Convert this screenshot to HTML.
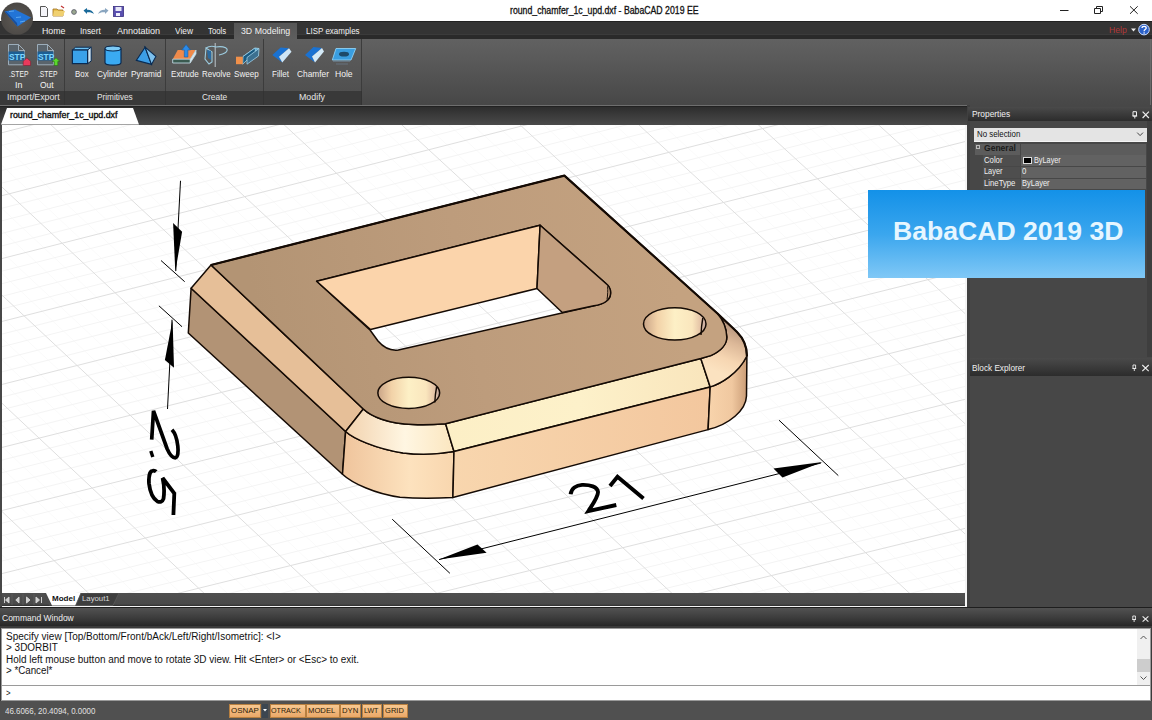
<!DOCTYPE html>
<html><head><meta charset="utf-8">
<style>
*{margin:0;padding:0;box-sizing:border-box}
html,body{width:1152px;height:720px;overflow:hidden;background:#474747;font-family:"Liberation Sans",sans-serif}
.a{position:absolute}
.t{position:absolute;white-space:nowrap;line-height:1}
#title{left:0;top:0;width:1152px;height:21px;background:#fff}
#tabbar{left:0;top:21px;width:1152px;height:18px;background:linear-gradient(#222 0,#222 1px,#343434 1px,#343434 13.5px,#3b3b3b 13.5px,#3b3b3b 14.5px,#2a2a2a 14.5px)}
#ribbon{left:0;top:39px;width:1152px;height:66px;background:linear-gradient(#616161,#5a5a5a 30%,#474747)}
.tab{color:#f0f0f0;font-size:9.6px;top:25.9px}
.grp{top:39px;height:52px;border-right:1px solid #3c3c3c;background:linear-gradient(#5e5e5e,#505050)}
.glab{top:91px;height:14px;background:#393939;border-right:1px solid #333}
.gtxt{color:#e6e6e6;font-size:9.4px;top:93.5px}
.btxt{color:#f2f2f2;font-size:9.4px;top:69.8px}
#doctabbar{left:0;top:105px;width:1152px;height:20px;background:linear-gradient(#6e6e6e 0,#6e6e6e 1.5px,#222 1.5px,#2e2e2e 2.5px,#4a4a4a 20px)}
#viewport{left:2px;top:125px;width:965px;height:482px;background:#fff;overflow:hidden}
#rpanel{left:967px;top:105px;width:185px;height:504px;background:#474747}
.phdr{position:absolute;background:linear-gradient(#4a4a4a,#2c2c2c);color:#f0f0f0}
.pt{color:#f0f0f0;font-size:9.4px}
.cmd{font-size:10px;color:#111}
.sb{position:absolute;top:704px;height:14px;background:linear-gradient(#f8c890,#eaa868);border:1px solid #b88040}
.sbt{color:#2a1a08;font-size:8px}
</style></head>
<body>
<!-- title bar -->
<div id="title" class="a"></div>
<div id="tabbar" class="a"></div>
<div id="ribbon" class="a"></div>
<div id="doctabbar" class="a"></div>

<!-- app logo -->
<svg class="a" style="left:0;top:0" width="36" height="37" viewBox="0 0 36 37">
  <defs><radialGradient id="lg" cx="50%" cy="55%" r="55%"><stop offset="0" stop-color="#5e5a55"/><stop offset="1" stop-color="#4a4744"/></radialGradient></defs>
  <circle cx="17" cy="18.6" r="16" fill="url(#lg)"/>
  <path d="M4.5 11.5 L15 9.5 L31 17.5 L17.5 26.5 Z" fill="#2274d6"/>
  <path d="M4.5 11.5 L17.5 26.5 L17 23 L6.5 12 Z" fill="#1a4e9a"/>
  <path d="M9 11.5 L14 11 M16 17.5 L21 17 M20 22 L25 21" stroke="#5aa6f0" stroke-width="1"/>
</svg>
<!-- quick access -->
<svg class="a" style="left:38px;top:4px" width="90" height="15" viewBox="38 4 90 15">
  <path d="M40.5 6.5 H45.5 L47.5 8.5 V16.5 H40.5 Z" fill="#f4f4f8" stroke="#555" stroke-width="1"/>
  <path d="M53 9 H57 L58 10 H63 V16 H53 Z" fill="#e8c050" stroke="#a07020" stroke-width="0.8"/>
  <path d="M54 11 H65 L63 16 H53 Z" fill="#f0d070"/>
  <path d="M61 6 L64 8" stroke="#c03030" stroke-width="1.2"/>
  <circle cx="74" cy="12" r="2.4" fill="#9aa890" stroke="#556" stroke-width="0.8"/>
  <path d="M83.5 10.5 L87 8 L87 9.8 C90 9.5 93 11 94 14 C92 12.5 90 12 87 12.3 L87 14 Z" fill="#1a6a9a"/>
  <path d="M108.5 10.5 L105 8 L105 9.8 C102 9.5 99 11 98 14 C100 12.5 102 12 105 12.3 L105 14 Z" fill="#8aa6c0"/>
  <rect x="113.5" y="6.5" width="10" height="10" fill="#5a50b0" stroke="#3a3080" stroke-width="0.8"/>
  <rect x="115.5" y="7" width="6" height="4" fill="#e8e8f8"/>
  <rect x="116" y="13" width="4" height="3" fill="#f0f0ff"/>
</svg>
<div id="t1" class="t" style="-webkit-text-stroke:0.3px #111;left:510.00px;top:5.97px;font-size:10.2px;color:#111;transform:scaleX(0.8558);transform-origin:0 0">round_chamfer_1c_upd.dxf - BabaCAD 2019 EE</div>
<!-- window controls -->
<svg class="a" style="left:1055px;top:3px" width="90" height="15" viewBox="1055 3 90 15">
  <path d="M1060 10.5 H1068.5" stroke="#222" stroke-width="1"/>
  <path d="M1094.5 8.5 H1100.5 V13.5 H1094.5 Z M1096.5 8.5 V6.5 H1102.5 V11.5 H1100.5" fill="none" stroke="#222" stroke-width="1"/>
  <path d="M1130 6.3 L1137.7 13.8 M1137.7 6.3 L1130 13.8" stroke="#222" stroke-width="1"/>
</svg>

<!-- ribbon tabs -->
<div class="a" style="left:234px;top:23px;width:63px;height:16px;background:linear-gradient(#565656,#5e5e5e)"></div>
<div id="t2" class="t tab" style="left:41.80px;font-size:9.6px;top:25.87px;transform:scaleX(0.9186);transform-origin:0 0">Home</div>
<div id="t3" class="t tab" style="left:80.00px;font-size:9.6px;top:25.87px;transform:scaleX(0.8632);transform-origin:0 0">Insert</div>
<div id="t4" class="t tab" style="left:117.00px;font-size:9.6px;top:25.87px;transform:scaleX(0.9398);transform-origin:0 0">Annotation</div>
<div id="t5" class="t tab" style="left:175.00px;font-size:9.6px;top:25.87px;transform:scaleX(0.8699);transform-origin:0 0">View</div>
<div id="t6" class="t tab" style="left:207.70px;font-size:9.6px;top:25.87px;transform:scaleX(0.8098);transform-origin:0 0">Tools</div>
<div id="t7" class="t tab" style="left:240.80px;font-size:9.6px;top:25.87px;transform:scaleX(0.9136);transform-origin:0 0">3D Modeling</div>
<div id="t8" class="t tab" style="left:305.70px;font-size:9.6px;top:25.87px;transform:scaleX(0.8327);transform-origin:0 0">LISP examples</div>
<div id="t9" class="t" style="left:1108.50px;top:24.87px;font-size:9.6px;color:#b03838;transform:scaleX(0.9023);transform-origin:0 0">Help</div>
<svg class="a" style="left:1128px;top:22px" width="24" height="16" viewBox="1128 22 24 16">
  <path d="M1131 28.5 H1136 L1133.5 31.5 Z" fill="#eee"/>
  <circle cx="1144" cy="29.6" r="5.3" fill="#2a60c8" stroke="#cfe0ff" stroke-width="1"/>
  <path d="M1142 28 C1142 25.8 1146.2 25.8 1146.2 28 C1146.2 29.6 1144.1 29.6 1144.1 31.3" fill="none" stroke="#fff" stroke-width="1.3"/>
  <circle cx="1144.1" cy="33" r="0.8" fill="#fff"/>
</svg>

<!-- ribbon groups -->
<div class="a grp" style="left:0;width:65px"></div>
<div class="a grp" style="left:65px;width:101px"></div>
<div class="a grp" style="left:166px;width:98px"></div>
<div class="a grp" style="left:264px;width:98px"></div>
<div class="a glab" style="left:0;width:65px"></div>
<div class="a glab" style="left:65px;width:101px"></div>
<div class="a glab" style="left:166px;width:98px"></div>
<div class="a glab" style="left:264px;width:98px"></div>
<div class="a" style="left:1150px;top:39px;width:1px;height:66px;background:#6a6a6a"></div>
<div id="t10" class="t gtxt" style="left:6.60px;font-size:9px;top:93.38px;transform:scaleX(0.9758);transform-origin:0 0">Import/Export</div>
<div id="t11" class="t gtxt" style="left:97.40px;font-size:9px;top:93.38px;transform:scaleX(0.9164);transform-origin:0 0">Primitives</div>
<div id="t12" class="t gtxt" style="left:202.30px;font-size:9px;top:93.38px;transform:scaleX(0.9294);transform-origin:0 0">Create</div>
<div id="t13" class="t gtxt" style="left:299.40px;font-size:9px;top:93.38px;transform:scaleX(0.9812);transform-origin:0 0">Modify</div>
<div id="t14" class="t btxt" style="left:8.50px;font-size:9.2px;top:70.01px;transform:scaleX(0.7343);transform-origin:0 0">.STEP</div>
<div id="t15" class="t btxt" style="left:14.90px;top:81.01px;font-size:9.2px;transform:scaleX(0.9666);transform-origin:0 0">In</div>
<div id="t16" class="t btxt" style="left:37.70px;font-size:9.2px;top:70.01px;transform:scaleX(0.7343);transform-origin:0 0">.STEP</div>
<div id="t17" class="t btxt" style="left:40.10px;top:81.01px;font-size:9.2px;transform:scaleX(0.9177);transform-origin:0 0">Out</div>
<div id="t18" class="t btxt" style="left:75.30px;font-size:9.2px;top:70.01px;transform:scaleX(0.8622);transform-origin:0 0">Box</div>
<div id="t19" class="t btxt" style="left:97.40px;font-size:9.2px;top:70.01px;transform:scaleX(0.8977);transform-origin:0 0">Cylinder</div>
<div id="t20" class="t btxt" style="left:131.30px;font-size:9.2px;top:70.01px;transform:scaleX(0.9022);transform-origin:0 0">Pyramid</div>
<div id="t21" class="t btxt" style="left:170.60px;font-size:9.2px;top:70.01px;transform:scaleX(0.8779);transform-origin:0 0">Extrude</div>
<div id="t22" class="t btxt" style="left:201.60px;font-size:9.2px;top:70.01px;transform:scaleX(0.8645);transform-origin:0 0">Revolve</div>
<div id="t23" class="t btxt" style="left:233.80px;font-size:9.2px;top:70.01px;transform:scaleX(0.8791);transform-origin:0 0">Sweep</div>
<div id="t24" class="t btxt" style="left:272.00px;font-size:9.2px;top:70.01px;transform:scaleX(0.8768);transform-origin:0 0">Fillet</div>
<div id="t25" class="t btxt" style="left:296.70px;font-size:9.2px;top:70.01px;transform:scaleX(0.9070);transform-origin:0 0">Chamfer</div>
<div id="t26" class="t btxt" style="left:335.40px;font-size:9.2px;top:70.01px;transform:scaleX(0.9316);transform-origin:0 0">Hole</div>

<!-- ICONS -->
<svg class="a" style="left:0;top:38px" width="370" height="32" viewBox="0 38 370 32">
 <!-- STEP In -->
 <path d="M8.5 44.5 H18.5 L24.5 50.5 V64.8 H8.5 Z M18.5 44.5 V50.5 H24.5" fill="#5a646c" stroke="#a4b6c4" stroke-width="0.9"/>
 <rect x="8.5" y="51.5" width="16" height="9" fill="#1d5f93"/>
 <text x="9" y="59.6" font-size="8.4" font-weight="bold" fill="#7fd6ff" font-family="Liberation Sans">STP</text>
 <path d="M26.9 58 L30.6 61.3 V65.5 H23.2 V61.3 Z" fill="#e83a5c" stroke="#7a2030" stroke-width="0.6"/>
 <!-- STEP Out -->
 <path d="M37.5 44.5 H47.5 L53.5 50.5 V64.8 H37.5 Z M47.5 44.5 V50.5 H53.5" fill="#5a646c" stroke="#a4b6c4" stroke-width="0.9"/>
 <rect x="37.5" y="51.5" width="16" height="9" fill="#1d5f93"/>
 <text x="38" y="59.6" font-size="8.4" font-weight="bold" fill="#7fd6ff" font-family="Liberation Sans">STP</text>
 <path d="M56 57.8 L60 61.5 H57.8 V65.5 H54.2 V61.5 H52 Z" fill="#5ad82c" stroke="#2a6a1a" stroke-width="0.6"/>
 <!-- Box -->
 <path d="M72.4 50 L75.6 47.2 H91.2 L87.6 50 Z" fill="#6cc0f2" stroke="#0a2a50" stroke-width="1"/>
 <path d="M87.6 50 L91.2 47.2 V61 L87.6 63.6 Z" fill="#cfe4f2" stroke="#0a2a50" stroke-width="1"/>
 <rect x="72.4" y="50" width="15.2" height="13.6" fill="#3aa2ea" stroke="#0a2a50" stroke-width="1.2"/>
 <!-- Cylinder -->
 <path d="M105 48.5 V62.5 A8 2.6 0 0 0 121 62.5 V48.5" fill="#3aaaf2" stroke="#0a2a50" stroke-width="1.2"/>
 <ellipse cx="113" cy="48.5" rx="8" ry="2.5" fill="#7ccaf6" stroke="#0a2a50" stroke-width="1.1"/>
 <!-- Pyramid -->
 <path d="M145.1 47.2 L136.3 60.4 L151.5 64.4 Z" fill="#3c9ee6" stroke="#0a2a50" stroke-width="1.1"/>
 <path d="M145.1 47.2 L155.9 56.4 L151.5 64.4 Z" fill="#7cc0ee" stroke="#0a2a50" stroke-width="1.1"/>
 <!-- Extrude -->
 <path d="M172.7 59.2 L177.7 50 H196 L190.2 59.2 Z" fill="#f08a4a"/>
 <path d="M172.7 59.2 H190.2 V63 H172.7 Z" fill="#3a5a50" stroke="#bcd6e0" stroke-width="0.9"/>
 <path d="M190.2 59.2 L196 50 V54 L190.2 63" fill="#d8e8f0" stroke="#bcd6e0" stroke-width="0.8"/>
 <path d="M184.3 57 V50 H181.8 L186.1 44.5 L190.4 50 H187.9 V57 Z" fill="#2a8ae8" stroke="#1a5aa0" stroke-width="0.6"/>
 <!-- Revolve -->
 <path d="M215.2 43 V67" stroke="#c8d4dc" stroke-width="0.9"/>
 <path d="M206 48 C209 46 213 46 216 47 C221 46 226 47 227 49 C228 52 224 54 219 55 M206 48 L205 59 L209 64 L212 62 L212 52 Z" fill="none" stroke="#9ccce0" stroke-width="1.1"/>
 <path d="M207 50 L211 51 L211 60 L208 58 Z" fill="#2a6aa0"/>
 <!-- Sweep -->
 <path d="M243 56.5 L255 48 L259 48.5 L247 57.5 Z" fill="#4aa8d8" stroke="#aad8ee" stroke-width="0.8"/>
 <path d="M243 56.5 L255 48 L255.5 52 L247 60 L242.7 64.2 Z" fill="#1a5a80" stroke="#9fd0e8" stroke-width="0.8"/>
 <path d="M247 57.5 L259 48.5 L258.5 56 L247 64.2 Z" fill="#3c7090" stroke="#9fd0e8" stroke-width="0.8"/>
 <rect x="236" y="56.7" width="6.7" height="7.5" fill="#f0904a"/>
 <!-- Fillet -->
 <path d="M272.3 55 L280.7 47.5 L289 48.3 L279 56.7 L282.3 62.5 Z" fill="#1a72d2"/>
 <path d="M279 56.7 L289 48.3 L291.5 51.7 L282.3 62.5 Z" fill="#cfe6f6"/>
 <!-- Chamfer -->
 <path d="M305 55 L313.5 47 L322 48 L312 56.5 L315 62.5 Z" fill="#1a72d2"/>
 <path d="M312 56.5 L322 48 L324 51.5 L315 62.5 Z" fill="#d4eaf8"/>
 <!-- Hole -->
 <path d="M336 48.5 H355.7 L351 60 H332.3 Z" fill="#3a9ee0" stroke="#8fd0f4" stroke-width="0.9"/>
 <ellipse cx="344" cy="54.2" rx="5" ry="2.4" fill="#1d4a6a"/>
 <path d="M333 61.5 H350 M336 64 H348" stroke="#6a7a88" stroke-width="0.8"/>
</svg>

<!-- doc tab -->
<svg class="a" style="left:0;top:107px" width="145" height="18" viewBox="0 107 145 18">
  <path d="M1 124.5 L7 108 H133 L139 124.5 Z" fill="#fff"/>
</svg>
<div id="t27" class="t" style="-webkit-text-stroke:0.35px #111;left:10.40px;top:110.82px;font-size:8.6px;color:#111;transform:scaleX(1.0272);transform-origin:0 0">round_chamfer_1c_upd.dxf</div>

<!-- viewport -->
<div id="viewport" class="a"></div>
<svg id="model" class="a" style="left:2px;top:125px" width="963" height="468" viewBox="2 125 963 468">
<defs>
 <linearGradient id="gFRC" x1="345" y1="0" x2="454" y2="0" gradientUnits="userSpaceOnUse">
  <stop offset="0" stop-color="#f2d2ae"/><stop offset="0.55" stop-color="#fff6e2"/><stop offset="1" stop-color="#fbe6bf"/></linearGradient>
 <linearGradient id="gFRS" x1="343" y1="0" x2="454" y2="0" gradientUnits="userSpaceOnUse">
  <stop offset="0" stop-color="#efc49c"/><stop offset="0.6" stop-color="#fde2be"/><stop offset="1" stop-color="#f8d6ae"/></linearGradient>
 <linearGradient id="gFC" x1="450" y1="0" x2="710" y2="0" gradientUnits="userSpaceOnUse">
  <stop offset="0" stop-color="#fcefc6"/><stop offset="0.5" stop-color="#fdf1ca"/><stop offset="1" stop-color="#f9e5bc"/></linearGradient>
 <linearGradient id="gFS" x1="450" y1="0" x2="710" y2="0" gradientUnits="userSpaceOnUse">
  <stop offset="0" stop-color="#f8d6ae"/><stop offset="1" stop-color="#f3c79e"/></linearGradient>
 <linearGradient id="gRC" x1="738" y1="326" x2="718" y2="372" gradientUnits="userSpaceOnUse">
  <stop offset="0" stop-color="#b3927a"/><stop offset="0.35" stop-color="#dcb898"/><stop offset="0.7" stop-color="#f6d6b2"/><stop offset="1" stop-color="#fbe2c0"/></linearGradient>
 <linearGradient id="gRS" x1="708" y1="0" x2="748" y2="0" gradientUnits="userSpaceOnUse">
  <stop offset="0" stop-color="#f8d4ac"/><stop offset="0.6" stop-color="#f0c8a0"/><stop offset="1" stop-color="#c89a74"/></linearGradient>
 <linearGradient id="gH" x1="0" y1="0" x2="1" y2="0">
  <stop offset="0" stop-color="#c9a487"/><stop offset="0.22" stop-color="#f2d2a8"/><stop offset="0.5" stop-color="#fdf0c6"/><stop offset="0.78" stop-color="#fae6bd"/><stop offset="0.9" stop-color="#e6c6a8"/><stop offset="1" stop-color="#c4a8a0"/></linearGradient>
 <linearGradient id="gTF" x1="260" y1="330" x2="670" y2="250" gradientUnits="userSpaceOnUse">
  <stop offset="0" stop-color="#b39474"/><stop offset="0.5" stop-color="#bd9c7c"/><stop offset="1" stop-color="#c4a280"/></linearGradient>
</defs>
<g id="grid" fill="none"><path stroke="#fafafa" stroke-width="1" d="M-576.5 157.8L155.8 852.6M-558.8 153.2L174.1 848.2M-541.1 148.6L192.5 843.7M-523.4 144.0L210.8 839.3M-488.0 134.8L247.6 830.5M-470.3 130.1L266.0 826.0M-452.5 125.5L284.4 821.6M-434.8 120.9L302.8 817.2M-399.2 111.6L339.7 808.3M-381.4 107.0L358.2 803.8M-363.6 102.3L376.7 799.4M-345.7 97.7L395.2 794.9M-310.0 88.4L432.3 786.0M-292.2 83.7L450.8 781.5M-274.3 79.1L469.4 777.0M-256.4 74.4L488.0 772.6M-220.5 65.1L525.2 763.6M-202.6 60.4L543.8 759.1M-184.6 55.7L562.4 754.6M-166.6 51.0L581.1 750.1M-130.6 41.7L618.4 741.1M-112.6 37.0L637.2 736.6M-94.6 32.3L655.9 732.1M-76.5 27.6L674.6 727.6M-40.4 18.1L712.1 718.6M-22.3 13.4L730.9 714.0M-4.2 8.7L749.7 709.5M13.9 4.0L768.5 705.0M50.2 -5.5L806.2 695.9M68.4 -10.2L825.0 691.3M86.5 -14.9L843.9 686.8M104.7 -19.7L862.8 682.3M141.2 -29.2L900.6 673.1M159.4 -33.9L919.5 668.6M177.6 -38.7L938.5 664.0M195.9 -43.4L957.5 659.4M232.5 -53.0L995.4 650.3M250.8 -57.7L1014.4 645.7M269.1 -62.5L1033.5 641.1M287.5 -67.3L1052.5 636.5M324.2 -76.9L1090.7 627.4M342.6 -81.6L1109.8 622.8M361.0 -86.4L1128.9 618.2M379.4 -91.2L1148.0 613.5M416.3 -100.8L1186.3 604.3M434.7 -105.7L1205.4 599.7M453.2 -110.5L1224.6 595.1M471.7 -115.3L1243.8 590.5M508.7 -124.9L1282.3 581.2M527.3 -129.8L1301.5 576.5M545.8 -134.6L1320.8 571.9M564.4 -139.4L1340.1 567.3M601.6 -149.1L1378.7 558.0M620.2 -154.0L1398.0 553.3M638.8 -158.8L1417.4 548.6M657.5 -163.7L1436.8 544.0M694.8 -173.4L1475.5 534.6M713.5 -178.3L1494.9 530.0M732.2 -183.1L1514.4 525.3M750.9 -188.0L1533.8 520.6"/><path stroke="#f4f4f4" stroke-width="1" d="M-583.9 172.1L780.6 -183.0M-573.6 181.9L791.6 -173.1M-563.4 191.6L802.5 -163.1M-553.1 201.3L813.5 -153.2M-532.6 220.8L835.5 -133.3M-522.3 230.6L846.5 -123.4M-512.0 240.4L857.5 -113.4M-501.7 250.1L868.5 -103.4M-481.1 269.7L890.6 -83.5M-470.8 279.5L901.6 -73.5M-460.5 289.3L912.7 -63.5M-450.2 299.1L923.7 -53.5M-429.5 318.7L945.8 -33.5M-419.2 328.5L956.9 -23.5M-408.8 338.3L968.0 -13.5M-398.5 348.1L979.1 -3.5M-377.7 367.8L1001.3 16.6M-367.4 377.6L1012.4 26.7M-357.0 387.5L1023.5 36.7M-346.6 397.4L1034.6 46.8M-325.8 417.1L1056.8 66.9M-315.4 427.0L1068.0 77.0M-305.0 436.8L1079.1 87.0M-294.6 446.7L1090.3 97.1M-273.8 466.5L1112.6 117.3M-263.4 476.4L1123.8 127.4M-252.9 486.3L1134.9 137.5M-242.5 496.2L1146.1 147.6M-221.6 516.1L1168.5 167.9M-211.1 526.0L1179.7 178.0M-200.7 535.9L1190.9 188.2M-190.2 545.9L1202.1 198.3M-169.2 565.8L1224.6 218.6M-158.7 575.7L1235.8 228.8M-148.2 585.7L1247.1 239.0M-137.7 595.7L1258.3 249.1M-116.7 615.6L1280.9 269.5M-106.2 625.6L1292.1 279.7M-95.7 635.6L1303.4 289.9M-85.1 645.6L1314.7 300.1M-64.0 665.6L1337.3 320.5M-53.5 675.6L1348.6 330.8M-42.9 685.7L1359.9 341.0M-32.4 695.7L1371.2 351.2M-11.2 715.8L1393.9 371.7M-0.6 725.8L1405.2 382.0M10.0 735.9L1416.6 392.3M20.5 745.9L1427.9 402.5M41.8 766.1L1450.7 423.1M52.4 776.1L1462.0 433.4M63.0 786.2L1473.4 443.7M73.6 796.3L1484.8 454.0M94.9 816.5L1507.6 474.6M105.5 826.6L1519.0 484.9M116.2 836.7L1530.4 495.2M126.8 846.9L1541.8 505.6"/><path stroke="#dfdfdf" stroke-width="1" d="M-594.1 162.4L137.5 857.0M-505.7 139.4L229.2 834.9M-417.0 116.3L321.3 812.7M-327.9 93.0L413.7 790.4M-238.5 69.7L506.6 768.1M-148.7 46.3L599.8 745.6M-58.5 22.9L693.4 723.1M32.0 -0.7L787.3 700.4M122.9 -24.4L881.7 677.7M214.2 -48.2L976.4 654.9M305.8 -72.1L1071.6 631.9M397.8 -96.0L1167.1 608.9M490.2 -120.1L1263.1 585.8M583.0 -144.3L1359.4 562.6M676.1 -168.5L1456.1 539.3M769.6 -192.9L1553.3 515.9M-594.1 162.4L769.6 -192.9M-542.8 211.1L824.5 -143.3M-491.4 259.9L879.6 -93.5M-439.8 308.9L934.8 -43.5M-388.1 358.0L990.2 6.6M-336.2 407.2L1045.7 56.8M-284.2 456.6L1101.4 107.2M-232.0 506.1L1157.3 157.8M-179.7 555.8L1213.4 208.5M-127.2 605.6L1269.6 259.3M-74.6 655.6L1326.0 310.3M-21.8 705.7L1382.6 361.5M31.2 756.0L1439.3 412.8M84.3 806.4L1496.2 464.3M137.5 857.0L1553.3 515.9"/></g>
<g stroke="#140a04" stroke-width="1.5" stroke-linejoin="round">
 <!-- left side -->
 <path d="M191.1 288.3 L345.6 431.5 L342.5 474.2 L188.3 333 Z" fill="#b29375"/>
 <!-- left chamfer -->
 <path d="M211 265 L363.3 409 L345.6 431.5 L191.1 288.3 Z" fill="#e6bf98"/>
 <!-- front round side -->
 <path d="M345.6 431.5 C353 438.3 375 448.5 403 453 C425 455.5 440 454 454 451.5 L452.9 497.5 C435 498.5 415 498.5 400 497.2 C375 494 352 483 342.5 474.2 Z" fill="url(#gFRS)"/>
 <!-- front round chamfer -->
 <path d="M363.3 409 C371 416.3 388 424 413 424.5 C425 425 436 424.5 445.6 423.75 L454 451.5 C440 454 425 455.5 403 453 C375 448.5 353 438.3 345.6 431.5 Z" fill="url(#gFRC)"/>
 <!-- front chamfer -->
 <path d="M445.6 423.75 L700.8 358.5 L710.2 386.9 L454 451.5 Z" fill="url(#gFC)"/>
 <!-- front side -->
 <path d="M454 451.5 L710.2 386.9 L708.1 429.6 L452.9 497.5 Z" fill="url(#gFS)"/>
 <!-- right round side -->
 <path d="M710.2 386.9 C720 384 738 374 746.9 356 L746.5 396 C746 410 730 424 708.1 429.6 Z" fill="url(#gRS)"/>
 <!-- right round chamfer -->
 <path d="M700.8 358.5 L710.8 355.6 C721 351 727 344 726.8 337 C726.5 328 723 320 717.5 313.5 C722 318 731 326 737 332 C743 338 747 345 746.9 356 C738 374 720 384 710.2 386.9 Z" fill="url(#gRC)"/>
 <!-- top face with square hole -->
 <path fill-rule="evenodd" fill="url(#gTF)" d="M211 265 L564.4 175.6 L717.5 313.5 C723 320 726.5 328 726.8 337 C727 344 721 351 710.8 355.6 L700.8 358.5 L445.6 423.75 C436 424.5 425 425 413 424.5 C388 424 371 416.3 363.3 409 Z
   M316.7 281.25 L540.1 225.3 L606.5 284 C611 287.5 613 296.5 606 301.5 C602.5 304 597.5 305.2 593.9 305.7 L398.3 350 C390 351 384 348 378 341 L370.2 330.2 Z"/>
 <!-- back wall -->
 <path d="M316.7 281.25 L540.1 225.3 L537 288.5 L370.5 329.5 Z" fill="#fbd4ab"/>
 <!-- right wall -->
 <path d="M540.1 225.3 L606.5 284 C611 287.5 613 296.5 606 301.5 C602.5 304 597.5 305.2 593.9 305.7 L562.3 312.5 L537 288.5 Z" fill="#c4a080"/>
 <path d="M607.6 286.3 C608 290 607.8 295 607 299.5" fill="none" stroke-width="1"/>
 <!-- round holes -->
 <ellipse cx="408.75" cy="392.9" rx="30.9" ry="15.6" fill="url(#gH)"/>
 <path d="M436.6 387 C435.6 392 435 397 434.8 402.5" fill="none" stroke-width="1.4"/>
 <ellipse cx="674.75" cy="323.9" rx="31.25" ry="16.2" fill="url(#gH)"/>
 <path d="M702.8 318 C701.8 323.5 701.2 329 701 335" fill="none" stroke-width="1.4"/>
 <!-- silhouette back edges thicker -->
 <path d="M211 265 L564.4 175.6 L717.5 313.5 C722 318 731 326 737 332 C743 338 747 345 746.9 356" fill="none" stroke-width="2.2"/>
</g>
<!-- dimensions -->
<g stroke="#000" fill="#000">
 <path d="M180.5 180.8 L175.8 271" stroke-width="1"/>
 <path d="M175.3 271.9 L173.1 223.1 L182.1 231.7 Z" stroke="none"/>
 <path d="M161 260.5 L184.7 281.7 M158.9 305.8 L182 326.7" stroke-width="1"/>
 <path d="M172 319.7 L167.5 409" stroke-width="1"/>
 <path d="M172.6 319.9 L164.9 360.1 L174 367.8 Z" stroke="none"/>
 <path d="M392.2 519.2 L449.9 573.3 M779 420.2 L838.3 475.6" stroke-width="1"/>
 <path d="M439 559.6 L821 463" stroke-width="1"/>
 <path d="M438.75 559.4 L477.5 544.4 L486.6 552.8 Z M822.5 462 L773.5 468.5 L782.5 477.5 Z" stroke="none"/>
 <path d="M570.6 494.2 C571.5 488.5 576 485.2 582 484.9 C590 484.6 597.5 486.8 598 492 C598.2 496.5 593.5 503 588.3 511.2 L616.3 505" fill="none" stroke-width="3.9" stroke-linejoin="miter"/>
 <path d="M610 486 L617.5 476.8 L643.5 498.6" fill="none" stroke-width="3.9" stroke-linejoin="miter"/>
 <path d="M151.7 439.7 L153.5 410.8 L167.1 448.7 C169 453 172 457.8 175.2 457.8 C178 457.5 178.5 452 177.8 446 C177 439 175 433 172 429.8" fill="none" stroke-width="3.7"/>
 <path d="M150.8 451 L152.8 457" fill="none" stroke-width="3.4"/>
 <path d="M173.4 515 L174.3 493.4 L162.6 478 C164 484 164.5 492 163.5 498.8 C162.5 502 159.9 502.4 157.5 501.5 C153.5 499 150 492 149 483.5 C148.5 476 150 471 152.5 470.8 C154 470.5 155.5 471 156.2 471.7" fill="none" stroke-width="3.8"/>
</g>
</svg>
<div class="a" style="left:2px;top:593px;width:964px;height:13px;background:linear-gradient(#4f4f4f,#4a4a4a 85%,#2e2e2e)"></div>
<div class="a" style="left:2px;top:606px;width:965px;height:1px;background:#f4f4f4"></div>
<div class="a" style="left:965px;top:125px;width:2px;height:482px;background:#f4f4f4"></div>
<svg class="a" style="left:2px;top:593px" width="130" height="13" viewBox="2 593 130 13">
  <path d="M4.5 597 V603 M9 597 L5.5 600 L9 603 Z M19 597 L15.8 600 L19 603 Z M26.5 597 L30 600 L26.5 603 Z M36 597 L39.5 600 L36 603 Z M41.5 597 V603" stroke="#d0d0d0" stroke-width="1" fill="#d0d0d0"/>
  <path d="M12 594 V605 M23 594 V605 M34 594 V605" stroke="#5a5a5a" stroke-width="1"/>
  <path d="M44 593 L49 605.5 H79 L84 593 Z" fill="#4c4c4c"/>
  <path d="M46 593 L52 605.5 H75.6 L81 593 Z" fill="#fff"/>
  <path d="M81 593 L75.6 605.5 H113 L119 593 Z" fill="#3e3e3e" stroke="#5a5a5a" stroke-width="0.8"/>
</svg>
<div id="t28" class="t" style="left:52.00px;top:594.63px;font-size:8px;font-weight:bold;color:#111;transform:scaleX(1.0049);transform-origin:0 0">Model</div>
<div id="t29" class="t" style="left:82.40px;top:594.63px;font-size:8px;color:#d8d8d8;transform:scaleX(0.9718);transform-origin:0 0">Layout1</div>

<!-- right panel -->
<div id="rpanel" class="a"></div>
<div class="a" style="left:967px;top:105px;width:3px;height:504px;background:#404040"></div>
<div class="a" style="left:1147px;top:121px;width:5px;height:236px;background:#3e3e3e"></div>
<div class="phdr" style="left:968px;top:107px;width:184px;height:14px"></div>
<div id="t30" class="t pt" style="left:972.00px;top:110.21px;font-size:9.2px;transform:scaleX(0.9106);transform-origin:0 0">Properties</div>
<svg class="a" style="left:1128px;top:108px" width="24" height="13" viewBox="1128 108 24 13">
  <path d="M1133 111.7 H1136.5 V116 H1133 Z M1134.8 116 V118.5 M1132.4 116 H1137.2" stroke="#eee" stroke-width="1" fill="none"/>
  <path d="M1142.6 111.7 L1148.9 118 M1148.9 111.7 L1142.6 118" stroke="#eee" stroke-width="1.2"/>
</svg>
<div class="a" style="left:974px;top:128px;width:173px;height:13.5px;background:#e4e4e4;border-bottom:1px solid #f4f4f4"></div>
<div id="t31" class="t" style="left:976.60px;top:130.48px;font-size:9px;color:#111;transform:scaleX(0.8744);transform-origin:0 0">No selection</div>
<svg class="a" style="left:1135px;top:130px" width="10" height="8" viewBox="1135 130 10 8">
  <path d="M1137.2 132.6 L1140.1 135.6 L1143 132.6" stroke="#333" stroke-width="0.9" fill="none"/>
</svg>
<div class="a" style="left:975px;top:143.5px;width:171px;height:11px;background:#5c5c5c"></div>
<div class="a" style="left:1020px;top:143.5px;width:1px;height:46px;background:#474747"></div>
<div class="a" style="left:983px;top:155px;width:37px;height:11.3px;background:#4e4e4e"></div>
<div class="a" style="left:1021px;top:155px;width:125px;height:11.3px;background:#626262"></div>
<div class="a" style="left:983px;top:167px;width:37px;height:10.6px;background:#4e4e4e"></div>
<div class="a" style="left:1021px;top:167px;width:125px;height:10.6px;background:#626262"></div>
<div class="a" style="left:983px;top:178.5px;width:37px;height:10.6px;background:#4e4e4e"></div>
<div class="a" style="left:1021px;top:178.5px;width:125px;height:10.6px;background:#626262"></div>
<div class="a" style="left:976.4px;top:145px;width:4px;height:4px;border:1px solid #bbb"></div>
<div id="t32" class="t" style="left:984.00px;top:144.18px;font-size:9px;font-weight:bold;color:#1a1a1a;transform:scaleX(0.9480);transform-origin:0 0">General</div>
<div id="t33" class="t pt" style="left:984.20px;top:156.38px;font-size:9px;transform:scaleX(0.8601);transform-origin:0 0">Color</div>
<div class="a" style="left:1022.6px;top:156.7px;width:9px;height:7.5px;background:#000;border:1px solid #ddd"></div>
<div id="t34" class="t pt" style="left:1034.00px;top:156.38px;font-size:9px;transform:scaleX(0.8117);transform-origin:0 0">ByLayer</div>
<div id="t35" class="t pt" style="left:984.20px;top:167.38px;font-size:9px;transform:scaleX(0.8216);transform-origin:0 0">Layer</div>
<div id="t36" class="t pt" style="left:1022.10px;top:167.38px;font-size:9px;transform:scaleX(0.8600);transform-origin:0 0">0</div>
<div id="t37" class="t pt" style="left:984.20px;top:179.08px;font-size:9px;transform:scaleX(0.8598);transform-origin:0 0">LineType</div>
<div id="t38" class="t pt" style="left:1021.80px;top:179.08px;font-size:9px;transform:scaleX(0.8359);transform-origin:0 0">ByLayer</div>

<div class="phdr" style="left:970px;top:358px;width:182px;height:17.5px"></div>
<div id="t39" class="t pt" style="left:972.40px;top:363.98px;font-size:9px;transform:scaleX(0.9134);transform-origin:0 0">Block Explorer</div>
<svg class="a" style="left:1128px;top:361px" width="24" height="14" viewBox="1128 361 24 14">
  <path d="M1133 365 H1135.6 V368.5 H1133 Z M1134.3 368.5 V371 M1132.4 368.5 H1136.2" stroke="#eee" stroke-width="0.9" fill="none"/>
  <path d="M1142.3 365 L1148.7 371.2 M1148.7 365 L1142.3 371.2" stroke="#eee" stroke-width="1.1"/>
</svg>

<!-- banner -->
<div class="a" style="left:868px;top:190.3px;width:277px;height:87.7px;background:linear-gradient(#1391e8,#3aa6ee 50%,#80c8f6)"></div>
<div id="t40" class="t" style="left:892.70px;top:218.08px;font-size:26.6px;font-weight:bold;color:#e6f6ff;transform:scaleX(0.9997);transform-origin:0 0">BabaCAD 2019 3D</div>

<!-- command window -->
<div class="a" style="left:0;top:607px;width:1152px;height:1px;background:#1e1e1e"></div>
<div class="phdr" style="left:0;top:608px;width:1152px;height:18px;background:linear-gradient(#525252,#3a3a3a 60%,#262626)"></div>
<div id="t41" class="t pt" style="left:2.30px;top:614.09px;font-size:8.4px;transform:scaleX(1.0140);transform-origin:0 0">Command Window</div>
<svg class="a" style="left:1128px;top:612px" width="24" height="12" viewBox="1128 612 24 12">
  <path d="M1132.8 616 H1135.4 V619.5 H1132.8 Z M1134.1 619.5 V622 M1132.2 619.5 H1136" stroke="#eee" stroke-width="0.9" fill="none"/>
  <path d="M1142.6 616.3 L1148.4 621.7 M1148.4 616.3 L1142.6 621.7" stroke="#eee" stroke-width="1.1"/>
</svg>
<div class="a" style="left:0;top:626px;width:1152px;height:75px;background:#3a3a3a"></div>
<div class="a" style="left:1px;top:627.5px;width:1150px;height:73.5px;background:#fff;border:1px solid #9a9a9a"></div>
<div class="a" style="left:1px;top:685px;width:1150px;height:1px;background:#9a9a9a"></div>
<div class="a" style="left:1137px;top:628.5px;width:13px;height:56.5px;background:#f0f0f0"></div>
<div class="a" style="left:1137px;top:659px;width:12.5px;height:12.7px;background:#cdcdcd"></div>
<svg class="a" style="left:1136px;top:630px" width="14" height="54" viewBox="1136 630 14 54">
  <path d="M1140.5 639 L1143.5 636 L1146.5 639" stroke="#555" stroke-width="1" fill="none"/>
  <path d="M1140.5 676.5 L1143.5 679.5 L1146.5 676.5" stroke="#555" stroke-width="1" fill="none"/>
</svg>
<div id="t42" class="t cmd" style="left:5.60px;top:632.03px;font-size:10px;transform:scaleX(1.0007);transform-origin:0 0">Specify view [Top/Bottom/Front/bAck/Left/Right/Isometric]: &lt;I&gt;</div>
<div id="t43" class="t cmd" style="left:5.60px;top:643.24px;font-size:10px;transform:scaleX(0.9971);transform-origin:0 0">&gt; 3DORBIT</div>
<div id="t44" class="t cmd" style="left:5.60px;top:654.53px;font-size:10px;transform:scaleX(0.9938);transform-origin:0 0">Hold left mouse button and move to rotate 3D view. Hit &lt;Enter&gt; or &lt;Esc&gt; to exit.</div>
<div id="t45" class="t cmd" style="left:5.60px;top:665.63px;font-size:10px;transform:scaleX(0.9761);transform-origin:0 0">&gt; *Cancel*</div>
<div id="t46" class="t" style="left:5.60px;top:688.37px;font-size:9.6px;color:#111;transform:scaleX(0.8167);transform-origin:0 0">&gt;</div>

<!-- status bar -->
<div class="a" style="left:0;top:701px;width:1152px;height:19px;background:#505050"></div>
<div id="t47" class="t" style="left:4.90px;top:706.92px;font-size:8.6px;color:#e0e0e0;transform:scaleX(0.9228);transform-origin:0 0">46.6066, 20.4094, 0.0000</div>
<div class="sb" style="left:229px;width:32px"></div>
<div id="t48" class="t sbt" style="left:230.80px;top:706.98px;font-size:8px;transform:scaleX(0.9902);transform-origin:0 0">OSNAP</div>
<div class="a" style="left:261.5px;top:704px;width:6.5px;height:14px;background:#3c4650"></div>
<svg class="a" style="left:262px;top:707px" width="6" height="6" viewBox="262 707 6 6"><path d="M263 709 H267 L265 711.5 Z" fill="#fff"/></svg>
<div class="sb" style="left:269.5px;width:36px"></div>
<div id="t49" class="t sbt" style="left:271.20px;top:706.98px;font-size:8px;transform:scaleX(0.8941);transform-origin:0 0">OTRACK</div>
<div class="sb" style="left:306px;width:33.5px"></div>
<div id="t50" class="t sbt" style="left:307.70px;top:706.98px;font-size:8px;transform:scaleX(0.9586);transform-origin:0 0">MODEL</div>
<div class="sb" style="left:339.8px;width:21.5px"></div>
<div id="t51" class="t sbt" style="left:341.50px;top:706.98px;font-size:8px;transform:scaleX(0.9642);transform-origin:0 0">DYN</div>
<div class="sb" style="left:361.5px;width:20.5px"></div>
<div id="t52" class="t sbt" style="left:363.75px;top:706.98px;font-size:8px;transform:scaleX(0.8869);transform-origin:0 0">LWT</div>
<div class="sb" style="left:382.5px;width:25px"></div>
<div id="t53" class="t sbt" style="left:384.60px;top:706.98px;font-size:8px;transform:scaleX(0.9445);transform-origin:0 0">GRID</div>
</body></html>
